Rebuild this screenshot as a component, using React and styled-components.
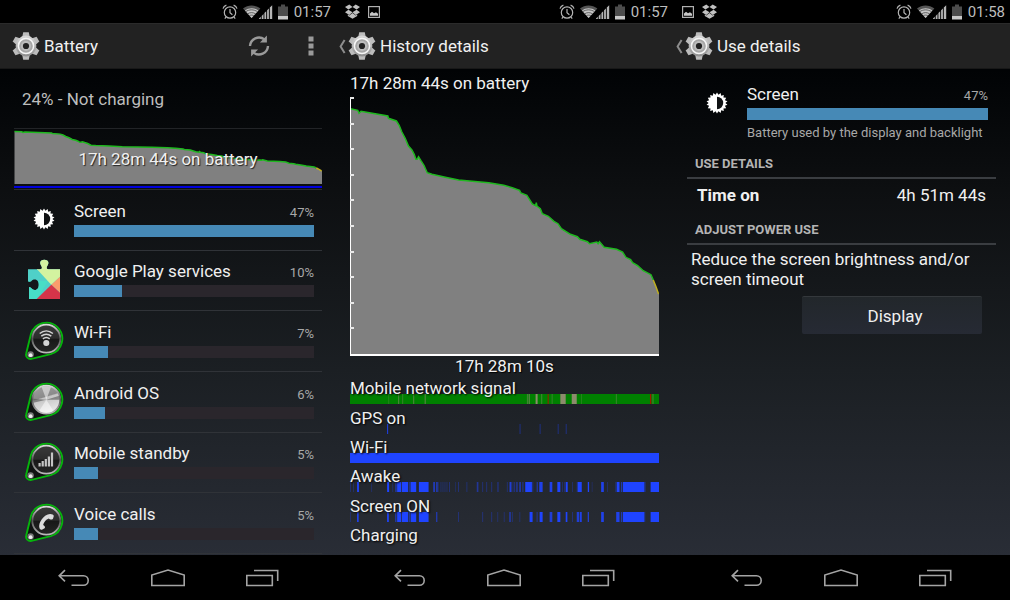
import React from 'react';
import styled, { createGlobalStyle } from 'styled-components';

const GlobalStyle = createGlobalStyle`
  * {
    box-sizing: border-box;
  }

  body {
    margin: 0;
    background: #fff;
    font-family: Roboto, "Noto Sans", sans-serif;
    font-size: 17px;
    line-height: 24px;
    color: #f0f0f0;
  }
`;

const Screens = styled.main`
  display: grid;
  grid-template-columns: 336fr 337fr 337fr;
  min-height: 100vh;
  padding-right: 5px;
`;

const Phone = styled.section`
  display: flex;
  flex-direction: column;
  min-width: 0;
  background: linear-gradient(#000204 60px, #0d0f11 190px, #1b1f23 370px, #292d36 556px);
`;

const StatusBar = styled.div`
  display: flex;
  align-items: center;
  justify-content: space-between;
  height: 23px;
  padding: 0 5px 0 9px;
  background: #000;
  color: #bdbdbd;

  svg {
    display: block;
  }
`;

const StatusGroup = styled.div`
  display: flex;
  align-items: center;
  gap: ${({ $gap }) => $gap}px;
`;

const Clock = styled.time`
  margin-left: 2px;
  font-size: 15px;
`;

const ActionBar = styled.header`
  display: flex;
  align-items: center;
  height: 46px;
  padding: 0 22px 0 3px;
  background: #222;
  border-top: 1px solid #2b2b2b;
  border-bottom: 1px solid #181818;
`;

const Title = styled.h1`
  flex: 1;
  margin: 0 0 0 4px;
  font-size: 17px;
  font-weight: 400;
`;

const IconButton = styled.button`
  display: flex;
  align-items: center;
  justify-content: center;
  padding: 0;
  border: 0;
  background: none;
  cursor: pointer;
`;

const UpButton = styled(IconButton)`
  width: 9px;
  height: 28px;
  justify-content: flex-start;
`;

const Actions = styled.div`
  display: flex;
  gap: 38px;
`;

const Content = styled.div`
  flex: 1;
  display: flex;
  flex-direction: column;
  padding: ${({ $top }) => $top || 0}px 14px ${({ $bottom }) => $bottom || 0}px;
`;

const NavBar = styled.nav`
  display: grid;
  grid-template-columns: 1fr 1fr 1fr;
  height: 45px;
  padding: 0 27px;
  background: #000;
`;

const BatteryStatus = styled.p`
  margin: 0;
  padding: 18px 8px 17px;
  color: #bdbdbd;
`;

const MiniChart = styled.div`
  position: relative;
  height: 62px;
  border-top: 1px solid #222427;
  border-bottom: 1px solid #2b2d31;

  svg {
    display: block;
    width: 100%;
    height: 55px;
  }
`;

const ChargeLine = styled.div`
  height: 2px;
  margin-top: 2px;
  background: #0000dc;
`;

const ChartCaption = styled.div`
  position: absolute;
  top: 18px;
  left: 0;
  right: 0;
  text-align: center;
  text-shadow: 1px 1px 1px #222;
`;

const UsageList = styled.ul`
  flex: 1;
  display: grid;
  grid-auto-rows: 1fr;
  margin: 0;
  padding: 0;
  list-style: none;
`;

const UsageRow = styled.li`
  display: flex;
  align-items: flex-end;
  padding: 0 8px 13px 0;
  border-bottom: 1px solid #303338;
`;

const IconSlot = styled.div`
  display: flex;
  align-items: center;
  justify-content: center;
  width: 60px;
  height: 36px;
`;

const Usage = styled.div`
  flex: 1;
  min-width: 0;
`;

const UsageHead = styled.div`
  display: flex;
  align-items: baseline;
  justify-content: space-between;
`;

const Percent = styled.span`
  font-size: 13px;
  color: #a8a8a8;
`;

const Track = styled.div`
  height: 12px;
  background: #2a262c;
`;

const Fill = styled.div`
  height: 100%;
  background: #4689b6;
`;

const Heading = styled.h2`
  margin: 0 0 2px;
  font-size: 17px;
  font-weight: 400;
`;

const HistoryChart = styled.svg`
  display: block;
  width: 100%;
  height: 260px;
`;

const Elapsed = styled.div`
  line-height: 18px;
  text-align: center;
  text-shadow: 1px 1px 1px #000;
`;

const Timelines = styled.div`
  flex: 1;
  display: grid;
  grid-auto-rows: 1fr;
`;

const Timeline = styled.div`
  display: flex;
  flex-direction: column;
  justify-content: flex-end;

  svg {
    display: block;
    width: 100%;
    height: 10px;
  }
`;

const TimelineLabel = styled.span`
  position: relative;
  z-index: 1;
  margin-bottom: -6px;
  text-shadow: 1px 1px 2px #000;
`;

const DetailHead = styled.div`
  display: flex;
  align-items: flex-start;
  padding-right: 8px;

  ${IconSlot} {
    height: 42px;
  }
`;

const Hint = styled.p`
  margin: 3px 0 0;
  font-size: 13px;
  line-height: 20px;
  white-space: nowrap;
  color: #a8a8a8;
`;

const SectionTitle = styled.h2`
  margin: 0;
  padding: ${({ $top }) => $top}px 8px 3px;
  border-bottom: 2px solid #3a3d41;
  font-size: 13px;
  font-weight: 700;
  line-height: 20px;
  color: #b4b4b4;
`;

const DetailRow = styled.div`
  display: flex;
  justify-content: space-between;
  padding: 4px 10px 0;
`;

const Advice = styled.p`
  margin: 4px 4px 7px;
  line-height: 20px;
`;

const DisplayButton = styled.button`
  align-self: flex-end;
  width: 180px;
  height: 38px;
  margin-right: 14px;
  padding: 0 0 0 6px;
  border: 0;
  border-top: 1px solid #34383c;
  border-radius: 2px;
  background: linear-gradient(#22272b, #262a34);
  color: #f0f0f0;
  font: inherit;
  cursor: pointer;
`;

const LEVELS = '0.5,11.7 7.7,13.3 9,16.3 11,14.3 37.7,19 38.3,21.3 46.3,24 49,28.3 51.7,35 55,41.3 58.3,49 61.7,53 64,57.3 65.7,62.3 67,62.3 68.3,59.7 70.7,63.7 73.7,68.3 77,75.7 81.7,77.3 95,80.3 108.3,83 138.3,85.7 153.3,88.3 161.7,90.7 169,93.3 170.3,96 176.3,98.3 181.7,107 185,108.7 185.7,105.7 186.3,109 189.7,111.7 191.7,116.7 197.7,119.3 203.3,124.3 207.3,126.7 210.7,131.7 219.7,137.3 226.7,139.7 229,142.3 236.7,144.7 238.7,146.7 246,145 247.3,146.7 248.7,144.7 253.3,150.3 265.7,152.3 271.7,155 275,160.3 279.7,162.7 281.7,165.7 286.7,168.7 292.3,173.7 300,177.7 302.3,183';
const LOW_LEVELS = '302.3,183 305,189.7 307.6,197';

const USAGE = [
  { name: 'Screen', percent: 47, icon: 'screen' },
  { name: 'Google Play services', percent: 10, bar: 20, icon: 'play' },
  { name: 'Wi-Fi', percent: 7, bar: 14, icon: 'wifi' },
  { name: 'Android OS', percent: 6, bar: 13, icon: 'system' },
  { name: 'Mobile standby', percent: 5, bar: 10, icon: 'signal' },
  { name: 'Voice calls', percent: 5, bar: 10, icon: 'phone' },
];

// [start, width, opacity] in thirds of a chart unit
const SCREEN_ON = [
  [0, 2, 0.4], [21, 5, 0.9], [111, 5, 1], [135, 4, 0.6], [141, 12, 1], [155, 19, 1],
  [176, 5, 0.5], [182, 16, 1], [206, 29, 1], [258, 3, 0.8], [324, 2, 0.5], [396, 2, 0.5],
  [423, 2, 0.5], [441, 2, 0.4], [460, 2, 0.4], [477, 3, 0.9], [484, 3, 0.3], [507, 2, 0.4],
  [537, 9, 1], [558, 3, 0.5], [567, 9, 1], [597, 8, 0.8], [620, 9, 1], [645, 5, 1],
  [664, 2, 0.5], [678, 7, 0.8], [687, 6, 0.9], [711, 3, 1], [751, 8, 0.9], [796, 10, 0.9],
  [810, 4, 0.6], [816, 64, 1], [880, 3, 0.4], [897, 3, 0.4], [900, 24, 1],
];

const AWAKE = [
  [0, 2, 0.4], [9, 2, 0.4], [21, 6, 0.9], [64, 2, 0.4], [111, 6, 1], [127, 2, 0.4],
  [135, 5, 0.5], [141, 12, 1], [155, 19, 1], [177, 5, 0.5], [182, 16, 1], [206, 29, 1],
  [249, 5, 0.7], [258, 4, 0.8], [264, 2, 0.3], [271, 2, 0.4], [277, 2, 0.4], [283, 2, 0.4],
  [289, 2, 0.4], [296, 2, 0.5], [315, 2, 0.3], [324, 2, 0.5], [348, 3, 0.3], [379, 5, 0.5],
  [396, 2, 0.5], [408, 2, 0.5], [423, 2, 0.5], [441, 3, 0.5], [469, 3, 0.3], [477, 6, 0.8],
  [486, 3, 0.3], [491, 2, 0.5], [496, 6, 0.4], [507, 3, 1], [515, 4, 0.4], [524, 20, 1],
  [545, 3, 0.4], [558, 4, 0.5], [566, 10, 0.9], [597, 8, 0.9], [620, 9, 1], [634, 2, 0.4],
  [640, 2, 0.4], [645, 6, 1], [664, 2, 0.4], [678, 3, 0.4], [681, 12, 1], [711, 4, 1],
  [723, 2, 0.3], [751, 8, 0.9], [769, 2, 0.4], [794, 3, 0.5], [798, 8, 1], [810, 4, 0.6],
  [816, 64, 1], [880, 4, 0.4], [897, 3, 0.4], [900, 24, 1],
];

const TIMELINES = [
  {
    label: 'Mobile network signal',
    base: '#008000',
    color: '#8c8c6c',
    marks: [
      [115, 2, 0.4], [144, 3, 0.6], [156, 3, 0.4], [189, 3, 0.6], [223, 4, 0.5],
      [529, 3, 0.5], [534, 4, 0.6], [555, 6, 1], [571, 4, 0.4], [591, 3, 1, '#a01800'],
      [603, 3, 0.4], [629, 16, 1], [663, 15, 1], [691, 2, 0.4], [795, 3, 0.4],
      [897, 4, 1, '#a01800'], [904, 4, 0.4],
    ],
  },
  {
    label: 'GPS on',
    color: '#1f44ff',
    marks: [[111, 3, 0.9], [507, 3, 0.4], [567, 3, 0.4], [621, 3, 0.4], [645, 3, 0.4]],
  },
  { label: 'Wi-Fi', base: '#1f44ff', marks: [] },
  { label: 'Awake', color: '#1f44ff', marks: AWAKE },
  { label: 'Screen ON', color: '#1f44ff', marks: SCREEN_ON },
  { label: 'Charging', marks: [] },
];

const SUN_POINTS = Array.from({ length: 36 }, (_, i) => {
  const angle = (i * Math.PI) / 18;
  const radius = i % 2 ? 8.4 : 10.6;
  return `${11 + radius * Math.sin(angle)},${11 - radius * Math.cos(angle)}`;
}).join(' ');

function AlarmIcon() {
  return (
    <svg width="16" height="16" viewBox="0 0 16 16" fill="none" stroke="#b5b5b5" strokeWidth="1.2">
      <circle cx="8" cy="8.5" r="5.7" />
      <path d="M8 5v3.7l2.4 2M1 4.6C1.4 3 2.8 1.6 4.4 1.1M15 4.6C14.6 3 13.2 1.6 11.6 1.1M4 13l-1.2 1.6M12 13l1.2 1.6" />
    </svg>
  );
}

function NetworkIcons() {
  return (
    <svg width="32" height="16" viewBox="0 0 32 16">
      <path d="M1 4.6C6 .6 13 .6 18.4 4.6L9.6 14Z" fill="#555" />
      <path d="M3 6.4C7 3.4 12.2 3.4 16.4 6.4L9.6 14Z" fill="#c8c8c8" />
      <path d="M3.6 7.8C7 5.2 12 5.2 15.6 7.8M5.5 9.9C8 8.2 11.2 8.2 13.7 9.9M7.3 11.8C8.6 10.9 10.6 10.9 11.9 11.8" fill="none" stroke="#333" strokeWidth="0.7" />
      <path d="M17 15h1.8v-2.2L17 14.6zM19.7 15h1.8V10l-1.8 1.9zM22.4 15h1.8V7.2l-1.8 1.9zM25.1 15h1.8V4.4l-1.8 1.9zM27.8 15h2.4V1.3l-2.4 2.2z" fill="#b5b5b5" />
    </svg>
  );
}

function BatteryIcon() {
  return (
    <svg width="10" height="16" viewBox="0 0 10 16">
      <path d="M0 2.500h3V.5h4v2h3V12H0z" fill="#4c4c4c" />
      <path d="M0 12h10v3.500H0z" fill="#c8c8c8" />
    </svg>
  );
}

function DropboxIcon() {
  return (
    <svg width="15" height="15" viewBox="0 0 15 15" fill="#c0c0c0">
      <path d="M4.3.5 7.5 3 3.4 5.6 0 3zM10.7.5 7.5 3l4.1 2.6L15 3zM0 8.300l3.400-2.600L7.500 8.300 4.300 10.900zM15 8.300l-3.400-2.600L7.500 8.300l3.200 2.600zM7.500 9l3.200 2.600 1.500-1v1.400L7.500 14.800 2.800 12v-1.400l1.500 1z" />
    </svg>
  );
}

function PictureIcon() {
  return (
    <svg width="12" height="12" viewBox="0 0 12 12">
      <rect x=".6" y=".6" width="10.8" height="10.8" fill="none" stroke="#b0b0b0" strokeWidth="1.2" />
      <path d="M2 9.800V7.500l2-1.700 2 1.500 2-1 2 1.400v2.100z" fill="#c8c8c8" />
    </svg>
  );
}

function GearIcon() {
  return (
    <svg width="28" height="28" viewBox="0 0 28 28">
      <defs>
        <linearGradient id="gear" x1="0" y1="0" x2="0" y2="1">
          <stop offset="0" stopColor="#dadada" />
          <stop offset="1" stopColor="#8e8e8e" />
        </linearGradient>
      </defs>
      <g fill="#bcbcbc">
        {[0, 60, 120, 180, 240, 300].map((angle) => (
          <path key={angle} d="M11.2.2h5.600l1.200 6h-8z" transform={`rotate(${angle} 14 14)`} />
        ))}
      </g>
      <circle cx="14" cy="14" r="10.4" fill="url(#gear)" />
      <circle cx="14" cy="14" r="7.6" fill="#a6a6a6" stroke="#f6f6f6" strokeWidth="1.5" />
      <circle cx="14" cy="14" r="5" fill="#bdbdbd" />
      <circle cx="14" cy="14" r="3.1" fill="#222" />
    </svg>
  );
}

function SunIcon() {
  return (
    <svg width="22" height="22" viewBox="0 0 22 22">
      <polygon points={SUN_POINTS} fill="#fff" />
      <path d="M11 4.8a6.2 6.2 0 0 1 0 12.4z" fill="#101214" />
    </svg>
  );
}

function PlayServicesIcon() {
  return (
    <svg width="32" height="40" viewBox="0 0 32 40">
      <clipPath id="puzzle">
        <path d="M0 10.3H12C14 10.3 14.200 9 13.600 7.600C12.800 6 12.200 5 12.200 3.800C12.200 1.500 14 .7 16.300.7S20.400 1.500 20.400 3.800C20.400 5 19.800 6 19 7.600C18.400 9 18.600 10.300 20.600 10.300H32V40H1V28.500C1 27.400 2.500 28 3.500 29.300C4.500 30.600 5.500 31 6.700 31C9.500 31 10.700 28.500 10.700 25.700S9.500 20.600 6.700 20.600C5.500 20.600 4.500 21 3.500 22C2.500 23 0 23.200 0 21.500Z" />
      </clipPath>
      <g clipPath="url(#puzzle)">
        <path d="M0 0h32v40H0z" fill="#4fd0c8" />
        <path d="M0 22h20L9 40H0z" fill="#45e4c4" opacity=".7" />
        <path d="M9 10.300V0h23v17.700l-8.700 8z" fill="#d3f3a0" />
        <path d="M32 17.700v16l-8.700-8z" fill="#fb9c6c" />
        <path d="M23.300 25.700 32 33.700V40H8.700z" fill="#d63449" />
      </g>
    </svg>
  );
}

const badgeGlyphs = {
  wifi: (
    <g fill="none" stroke="#d4d4d4" strokeWidth="1.5">
      <path d="M15.700 13.500c4-3.400 9.200-3.400 13.200 0M17.300 16.200c3-2.400 7-2.400 10 0M18.900 18.800c2-1.600 4.800-1.600 6.800 0" />
      <circle cx="22.3" cy="23" r="2.3" fill="#d4d4d4" />
    </g>
  ),
  system: null,
  signal: (
    <path d="M14.500 22h2.200v3.500h-2.200zM17.600 20h2.200v5.500h-2.200zM20.700 18h2.200v7.500h-2.200zM23.800 15.500H26v10h-2.200zM26.900 11.500h2.200v14h-2.200z" fill="#c4c4c4" />
  ),
  phone: (
    <path d="M15.500 26.300c-1.800-5.800 4.500-14 10.500-14.400 1.500-.1 4 .8 3.800 2.200l-.8 2.700c-.4 1.200-3.300.9-4.200-.4-2.800.8-5.300 4.200-5.600 6.600 1.500.6 2.400 2.400 1.400 3.300l-2.200 1.300c-1.100.6-2.500-.2-2.900-1.300z" fill="#dcdcdc" />
  ),
};

function BadgeIcon({ kind }) {
  const metal = kind === 'system';
  return (
    <svg width="40" height="40" viewBox="0 0 40 40">
      <defs>
        <linearGradient id={`ring-${kind}`} x1="0" y1="0" x2="0" y2="1">
          <stop offset="0" stopColor="#d8d8d8" />
          <stop offset=".5" stopColor="#555" />
          <stop offset="1" stopColor="#bbb" />
        </linearGradient>
        <linearGradient id={`disc-${kind}`} x1="0" y1="0" x2={metal ? '.3' : '0'} y2="1">
          <stop offset="0" stopColor={metal ? '#a2a2a2' : '#3a3a3a'} />
          <stop offset=".48" stopColor={metal ? '#8a8a8a' : '#2c2c2c'} />
          <stop offset=".52" stopColor={metal ? '#c4c4c4' : '#181818'} />
          <stop offset="1" stopColor={metal ? '#e6e6e6' : '#262626'} />
        </linearGradient>
      </defs>
      <path d="M6.900 14.300A16 16 0 1 1 26.700 34.100L7.500 38.800A4.300 4.300 0 0 1 2.200 33.500Z" fill="#101312" stroke="#06b40c" strokeWidth="1.9" />
      <circle cx="22.3" cy="18.7" r="14" fill={`url(#disc-${kind})`} stroke={`url(#ring-${kind})`} strokeWidth="1.8" />
      {metal && (
        <>
          <path d="m22.300 18.700-4.600-12.400c3-1.200 6.200-1.200 9.200 0zM22.300 18.700l-7 11c4 3 10 3 14 0z" fill="#fff" opacity=".5" />
          <path d="m22.300 18.700-13-1v4zM22.300 18.700l13-4v4z" fill="#555" opacity=".6" />
        </>
      )}
      {badgeGlyphs[kind]}
      <circle cx="6.6" cy="34.4" r="3.2" fill="#777" />
      <circle cx="6.6" cy="35.2" r="1.9" fill="#eee" />
    </svg>
  );
}

function UsageIcon({ kind }) {
  if (kind === 'screen') return <SunIcon />;
  if (kind === 'play') return <PlayServicesIcon />;
  return <BadgeIcon kind={kind} />;
}

function SystemBar({ time, children }) {
  return (
    <StatusBar>
      <StatusGroup $gap={8}>{children}</StatusGroup>
      <StatusGroup $gap={4}>
        <AlarmIcon />
        <NetworkIcons />
        <BatteryIcon />
        <Clock>{time}</Clock>
      </StatusGroup>
    </StatusBar>
  );
}

function Header({ title, up, children }) {
  return (
    <ActionBar>
      <UpButton aria-label="Navigate up" disabled={!up}>
        {up && (
          <svg width="7" height="15" viewBox="0 0 7 15" fill="none" stroke="#8c8c8c" strokeWidth="2">
            <path d="M5.600 1 1.600 7.500l4 6.500" />
          </svg>
        )}
      </UpButton>
      <GearIcon />
      <Title>{title}</Title>
      {children}
    </ActionBar>
  );
}

function Navigation() {
  return (
    <NavBar>
      <IconButton aria-label="Back">
        <svg width="32" height="18" viewBox="0 0 32 18" fill="none" stroke="#a4a4a4" strokeWidth="1.6">
          <path d="M7 1.200 1.200 6.800 7 12.300M1.200 6.800H25.500a4.700 4.700 0 0 1 0 9.400H13.500" />
        </svg>
      </IconButton>
      <IconButton aria-label="Home">
        <svg width="34" height="18" viewBox="0 0 34 18" fill="none" stroke="#a4a4a4" strokeWidth="1.6">
          <path d="M.8 16.500V6L17 1l16.200 5v10.500z" />
        </svg>
      </IconButton>
      <IconButton aria-label="Recent apps">
        <svg width="33" height="18" viewBox="0 0 33 18" fill="none" stroke="#a4a4a4" strokeWidth="1.6">
          <path d="M.8 6.500h25.500v10H.8zM8 1.500h23.700v10.500" />
        </svg>
      </IconButton>
    </NavBar>
  );
}

function UsageMeter({ name, percent, bar = 100, children }) {
  return (
    <Usage>
      <UsageHead>
        <span>{name}</span>
        <Percent>{percent}%</Percent>
      </UsageHead>
      <Track role="progressbar" aria-label={name} aria-valuenow={percent}>
        <Fill style={{ width: `${bar}%` }} />
      </Track>
      {children}
    </Usage>
  );
}

function LevelCurve() {
  return (
    <>
      <polygon points={`0.5,258 ${LEVELS} ${LOW_LEVELS} 308,197 308,258`} fill="#808080" />
      <polyline points={LEVELS} fill="none" stroke="#1fb81f" strokeWidth="1.5" vectorEffect="non-scaling-stroke" />
      <polyline points={LOW_LEVELS} fill="none" stroke="#c0b020" strokeWidth="1.5" vectorEffect="non-scaling-stroke" />
    </>
  );
}

function BatteryScreen() {
  return (
    <Phone>
      <SystemBar time="01:57" />
      <Header title="Battery">
        <Actions>
          <IconButton aria-label="Refresh">
            <svg width="22" height="22" viewBox="0 0 22 22">
              <path d="M2 11a9 9 0 0 1 14.500-6.600M20 11A9 9 0 0 1 5.500 17.600" fill="none" stroke="#9a9a9a" strokeWidth="2.4" />
              <path d="M18.900.5v7h-7zM3.100 21.500v-7h7z" fill="#9a9a9a" />
            </svg>
          </IconButton>
          <IconButton aria-label="More options">
            <svg width="6" height="20" viewBox="0 0 6 20" fill="#9a9a9a">
              <path d="M.5.5h5v5h-5zM.5 7.500h5v5h-5zM.5 14.500h5v5h-5z" />
            </svg>
          </IconButton>
        </Actions>
      </Header>
      <Content $bottom={1}>
        <BatteryStatus>24% - Not charging</BatteryStatus>
        <MiniChart>
          <svg viewBox="0 0 308 258" preserveAspectRatio="none">
            <LevelCurve />
          </svg>
          <ChargeLine />
          <ChartCaption>17h 28m 44s on battery</ChartCaption>
        </MiniChart>
        <UsageList>
          {USAGE.map((item) => (
            <UsageRow key={item.name}>
              <IconSlot>
                <UsageIcon kind={item.icon} />
              </IconSlot>
              <UsageMeter {...item} />
            </UsageRow>
          ))}
        </UsageList>
      </Content>
      <Navigation />
    </Phone>
  );
}

function HistoryScreen() {
  return (
    <Phone>
      <SystemBar time="01:57">
        <DropboxIcon />
        <PictureIcon />
      </SystemBar>
      <Header title="History details" up />
      <Content $top={2} $bottom={4}>
        <Heading>17h 28m 44s on battery</Heading>
        <HistoryChart viewBox="0 0 308 260" preserveAspectRatio="none">
          <LevelCurve />
          <path d="M.5 0v259" stroke="#fff" />
          {Array.from({ length: 10 }, (_, i) => (
            <rect key={i} x="0" y={Math.round(i * 25.6)} width="4" height="2" fill="#e6e6e6" />
          ))}
          <rect x="0" y="257" width="308" height="2" fill="#fff" />
        </HistoryChart>
        <Elapsed>17h 28m 10s</Elapsed>
        <Timelines>
          {TIMELINES.map(({ label, base, color, marks }) => (
            <Timeline key={label}>
              <TimelineLabel>{label}</TimelineLabel>
              <svg viewBox="0 0 924 10" preserveAspectRatio="none">
                {base && <rect width="924" height="10" fill={base} />}
                {marks.map(([x, width, opacity, fill]) => (
                  <rect key={x} x={x} width={width} height="10" fill={fill || color} opacity={opacity} />
                ))}
              </svg>
            </Timeline>
          ))}
        </Timelines>
      </Content>
      <Navigation />
    </Phone>
  );
}

function UseScreen() {
  return (
    <Phone>
      <SystemBar time="01:58">
        <PictureIcon />
        <DropboxIcon />
      </SystemBar>
      <Header title="Use details" up />
      <Content $top={13}>
        <DetailHead>
          <IconSlot>
            <SunIcon />
          </IconSlot>
          <UsageMeter name="Screen" percent={47}>
            <Hint>Battery used by the display and backlight</Hint>
          </UsageMeter>
        </DetailHead>
        <SectionTitle $top={11}>USE DETAILS</SectionTitle>
        <DetailRow>
          <strong>Time on</strong>
          <span>4h 51m 44s</span>
        </DetailRow>
        <SectionTitle $top={13}>ADJUST POWER USE</SectionTitle>
        <Advice>Reduce the screen brightness and/or screen timeout</Advice>
        <DisplayButton>Display</DisplayButton>
      </Content>
      <Navigation />
    </Phone>
  );
}

function App() {
  return (
    <>
      <GlobalStyle />
      <Screens>
        <BatteryScreen />
        <HistoryScreen />
        <UseScreen />
      </Screens>
    </>
  );
}

export default App;
